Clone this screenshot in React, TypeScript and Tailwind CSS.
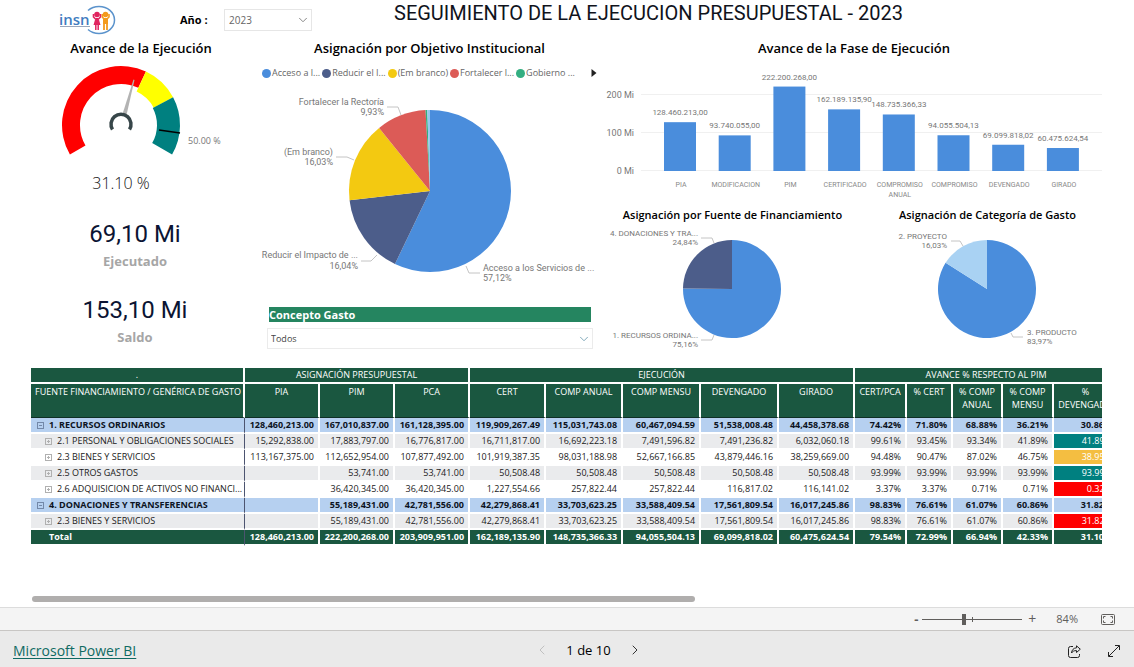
import { ChevronLeft, ChevronRight, ChevronDown } from 'lucide-react'

const BLUE = '#4a8ddc'
const NAVY = '#4c5d8a'

type Slice = { value: number; color: string }
type Callout = {
  lines: [string, string]
  x: number
  y: number
  gap: number
  anchor: 'start' | 'end'
  leader: string
}

// Point on a circle, angle in degrees clockwise from 12 o'clock
function polar(cx: number, cy: number, r: number, deg: number) {
  const a = (deg * Math.PI) / 180
  return `${(cx + r * Math.sin(a)).toFixed(2)} ${(cy - r * Math.cos(a)).toFixed(2)}`
}

function ringPath(cx: number, cy: number, outer: number, inner: number, from: number, to: number) {
  const large = to - from > 180 ? 1 : 0
  return [
    `M${polar(cx, cy, outer, from)}`,
    `A${outer} ${outer} 0 ${large} 1 ${polar(cx, cy, outer, to)}`,
    `L${polar(cx, cy, inner, to)}`,
    `A${inner} ${inner} 0 ${large} 0 ${polar(cx, cy, inner, from)}Z`,
  ].join(' ')
}

function Pie({ cx, cy, r, slices }: { cx: number; cy: number; r: number; slices: Slice[] }) {
  let start = 0
  return (
    <g>
      {slices.map((s, i) => {
        const end = start + s.value * 3.6
        const d = `M${cx} ${cy} L${polar(cx, cy, r, start)} A${r} ${r} 0 ${end - start > 180 ? 1 : 0} 1 ${polar(cx, cy, r, end)}Z`
        start = end
        return <path key={i} d={d} fill={s.color} />
      })}
    </g>
  )
}

function Callouts({ items, className }: { items: Callout[]; className: string }) {
  return (
    <g className={className}>
      {items.map((c) => (
        <g key={c.lines[0]}>
          <polyline points={c.leader} fill="none" stroke="#c4c4c4" />
          <text x={c.x} y={c.y} textAnchor={c.anchor}>{c.lines[0]}</text>
          <text x={c.x} y={c.y + c.gap} textAnchor={c.anchor}>{c.lines[1]}</text>
        </g>
      ))}
    </g>
  )
}

function Logo() {
  return (
    <svg viewBox="0 0 57 32" className="h-8 w-[57px]" role="img" aria-label="insn">
      <path d="M29 6.500 A15.500 13.500 0 1 1 29 25.500" fill="none" stroke="#5b93cc" strokeWidth="1.500" />
      <text x="0" y="21" fill="#3f7cc0" className="font-['Open_Sans'] text-[15px] font-semibold">insn</text>
      <rect x="1" y="22" width="30" height="1" fill="#9aa7bd" />
      <g fill="#e0245e" stroke="#e0245e">
        <circle cx="38" cy="10.500" r="2.800" stroke="none" />
        <path d="M34.500 10 L34.500 13 L36.500 15 M41.500 10 L41.500 13 L39.500 15" fill="none" strokeWidth="1.600" />
        <path d="M36.500 14h3l2 7h-7z" stroke="none" />
        <path d="M36.800 20v6M39.200 20v6" strokeWidth="1.500" />
      </g>
      <g fill="#f39a1d" stroke="#f39a1d">
        <circle cx="46.500" cy="10.500" r="2.800" stroke="none" />
        <path d="M43.300 10 L43.300 13 L45 15 M50 10 L50 13 L48 15" fill="none" strokeWidth="1.600" />
        <path d="M44 14h5v6h-5z" stroke="none" />
        <path d="M45 19v7M48 19v7" strokeWidth="1.800" />
      </g>
    </svg>
  )
}

function Gauge() {
  const cx = 121
  const cy = 67
  return (
    <svg viewBox="0 0 250 140" className="w-full" role="img" aria-label="Avance 31.10 %">
      <path d={ringPath(cx, cy, 59, 41, -120, 25)} fill="#ff0000" />
      <path d={ringPath(cx, cy, 59, 37, 25, 62)} fill="#ffff00" />
      <path d={ringPath(cx, cy, 59, 36, 62, 120)} fill="#008080" />
      <path d="M159 72 L180 75" stroke="#000" strokeWidth="1.500" />
      <path d="M122.500 56 L126.500 57 L134.500 22 L133.500 21.500Z" fill="#b3b3b3" />
      <path d="M112.500 71.500 A10 10 0 1 1 129.500 71.500" fill="none" stroke="#374649" strokeWidth="3.500" />
      <text x="188" y="86" className="fill-[#777] font-['Open_Sans'] text-[9px]">50.00 %</text>
      <text x="121" y="131" textAnchor="middle" className="fill-[#111] font-['Open_Sans'] text-[16px] font-light">31.10 %</text>
    </svg>
  )
}

function Card({ value, label }: { value: string; label: string }) {
  return (
    <div className="pl-5 text-center">
      <p className="font-['Roboto'] text-2xl leading-8 text-[#0b1433]">{value}</p>
      <p className="text-[13px] leading-[22px] font-bold text-[#a6a6a6]">{label}</p>
    </div>
  )
}

const legend = [
  { label: 'Acceso a l...', dot: 'bg-[#4a8ddc]' },
  { label: 'Reducir el I...', dot: 'bg-[#4c5d8a]' },
  { label: '(Em branco)', dot: 'bg-[#f3c911]' },
  { label: 'Fortalecer l...', dot: 'bg-[#dc5b57]' },
  { label: 'Gobierno ...', dot: 'bg-[#33ae81]' },
]

const objetivoCallouts: Callout[] = [
  { lines: ['Fortalecer la Rectoría', '9,93%'], x: 134, y: 21, gap: 10, anchor: 'end', leader: '137,23 148,23 151,31' },
  { lines: ['(Em branco)', '16,03%'], x: 83, y: 71, gap: 10, anchor: 'end', leader: '86,73 97,73 104,76' },
  { lines: ['Reducir el Impacto de ...', '16,04%'], x: 108, y: 174, gap: 11, anchor: 'end', leader: '111,177 121,177 127,171' },
  { lines: ['Acceso a los Servicios de ...', '57,12%'], x: 233, y: 187, gap: 10, anchor: 'start', leader: '216,182 219,189 230,189' },
]

const fuenteCallouts: Callout[] = [
  { lines: ['4. DONACIONES Y TRA...', '24,84%'], x: 93, y: 11, gap: 9, anchor: 'end', leader: '96,13 107,13 109,18' },
  { lines: ['1. RECURSOS ORDINA...', '75,16%'], x: 93, y: 113, gap: 9, anchor: 'end', leader: '96,115 107,115 109,110' },
]

const categoriaCallouts: Callout[] = [
  { lines: ['2. PROYECTO', '16,03%'], x: 87, y: 14, gap: 9, anchor: 'end', leader: '91,16 100,16 103,21' },
  { lines: ['3. PRODUCTO', '83,97%'], x: 167, y: 110, gap: 9, anchor: 'start', leader: '151,108 153,112 163,112' },
]

const fases = [
  { name: ['PIA'], value: 128.46, label: '128.460.213,00' },
  { name: ['MODIFICACION'], value: 93.74, label: '93.740.055,00' },
  { name: ['PIM'], value: 222.2, label: '222.200.268,00' },
  { name: ['CERTIFICADO'], value: 162.19, label: '162.189.135,90' },
  { name: ['COMPROMISO', 'ANUAL'], value: 148.74, label: '148.735.366,33' },
  { name: ['COMPROMISO'], value: 94.06, label: '94.055.504,13' },
  { name: ['DEVENGADO'], value: 69.1, label: '69.099.818,02' },
  { name: ['GIRADO'], value: 60.48, label: '60.475.624,54' },
]

function FaseChart() {
  const base = 113
  return (
    <svg viewBox="0 0 510 147" className="w-full font-['Roboto']" role="img" aria-label="Avance de la Fase de Ejecución">
      {[0, 100, 200].map((t) => (
        <g key={t}>
          <line x1="36" x2="497" y1={base - t * 0.38 - 0.5} y2={base - t * 0.38 - 0.5} stroke="#f0f0f0" />
          <text x="29" y={base - t * 0.38 + 3} textAnchor="end" className="fill-[#777] text-[9px]">{t} Mi</text>
        </g>
      ))}
      {fases.map((f, i) => {
        const x = 75 + i * 54.7
        const h = f.value * 0.38
        return (
          <g key={f.label} textAnchor="middle">
            <rect x={x - 16} y={base - h} width="32" height={h} fill={BLUE} />
            <text x={x} y={base - h - 7} className="fill-[#777] text-[8px]">{f.label}</text>
            {f.name.map((n, line) => (
              <text key={n} x={x + 1} y={129 + line * 10} className="fill-[#888] text-[7px]">{n}</text>
            ))}
          </g>
        )
      })}
    </svg>
  )
}

const columns = [
  'PIA', 'PIM', 'PCA', 'CERT', 'COMP ANUAL', 'COMP MENSU', 'DEVENGADO', 'GIRADO',
  'CERT/PCA', '% CERT', '% COMP ANUAL', '% COMP MENSU', '% DEVENGADO',
]

type Row = { name: string; level: 0 | 1 | 2; cells: string[]; mark?: string }

const rows: Row[] = [
  { name: '1. RECURSOS ORDINARIOS', level: 0, cells: ['128,460,213.00', '167,010,837.00', '161,128,395.00', '119,909,267.49', '115,031,743.08', '60,467,094.59', '51,538,008.48', '44,458,378.68', '74.42%', '71.80%', '68.88%', '36.21%', '30.86%'] },
  { name: '2.1 PERSONAL Y OBLIGACIONES SOCIALES', level: 1, mark: 'bg-[#008080]', cells: ['15,292,838.00', '17,883,797.00', '16,776,817.00', '16,711,817.00', '16,692,223.18', '7,491,596.82', '7,491,236.82', '6,032,060.18', '99.61%', '93.45%', '93.34%', '41.89%', '41.89%'] },
  { name: '2.3 BIENES Y SERVICIOS', level: 1, mark: 'bg-[#f4be41]', cells: ['113,167,375.00', '112,652,954.00', '107,877,492.00', '101,919,387.35', '98,031,188.98', '52,667,166.85', '43,879,446.16', '38,259,669.00', '94.48%', '90.47%', '87.02%', '46.75%', '38.95%'] },
  { name: '2.5 OTROS GASTOS', level: 1, mark: 'bg-[#008080]', cells: ['', '53,741.00', '53,741.00', '50,508.48', '50,508.48', '50,508.48', '50,508.48', '50,508.48', '93.99%', '93.99%', '93.99%', '93.99%', '93.99%'] },
  { name: '2.6 ADQUISICION DE ACTIVOS NO FINANCI...', level: 1, mark: 'bg-[#ff0000]', cells: ['', '36,420,345.00', '36,420,345.00', '1,227,554.66', '257,822.44', '257,822.44', '116,817.02', '116,141.02', '3.37%', '3.37%', '0.71%', '0.71%', '0.32%'] },
  { name: '4. DONACIONES Y TRANSFERENCIAS', level: 0, cells: ['', '55,189,431.00', '42,781,556.00', '42,279,868.41', '33,703,623.25', '33,588,409.54', '17,561,809.54', '16,017,245.86', '98.83%', '76.61%', '61.07%', '60.86%', '31.82%'] },
  { name: '2.3 BIENES Y SERVICIOS', level: 1, mark: 'bg-[#ff0000]', cells: ['', '55,189,431.00', '42,781,556.00', '42,279,868.41', '33,703,623.25', '33,588,409.54', '17,561,809.54', '16,017,245.86', '98.83%', '76.61%', '61.07%', '60.86%', '31.82%'] },
  { name: 'Total', level: 2, cells: ['128,460,213.00', '222,200,268.00', '203,909,951.00', '162,189,135.90', '148,735,366.33', '94,055,504.13', '69,099,818.02', '60,475,624.54', '79.54%', '72.99%', '66.94%', '42.33%', '31.10%'] },
]

function Expander({ open }: { open: boolean }) {
  return (
    <button type="button" aria-label={open ? 'Contraer' : 'Expandir'} className="block">
      <svg viewBox="0 0 7 7" className="size-[7px]" fill="none" stroke={open ? '#7388a8' : '#b0b0b0'}>
        <rect x="0.5" y="0.5" width="6" height="6" />
        <path d={open ? 'M2 3.5h3' : 'M2 3.5h3M3.5 2v3'} />
      </svg>
    </button>
  )
}

function BudgetTable() {
  const head = 'border-r-2 border-b-2 border-white bg-[#1a5740] font-normal text-white'
  return (
    <table className="w-[1088px] table-fixed border-separate border-spacing-0 text-[9px] leading-[14px] text-[#1a1a1a]">
      <colgroup>
        <col className="w-[214px]" />
        <col className="w-[75px]" />
        <col className="w-[75px]" />
        <col className="w-[75px]" />
        <col className="w-[76px]" />
        <col className="w-[77px]" />
        <col className="w-[78px]" />
        <col className="w-[78px]" />
        <col className="w-[76px]" />
        <col className="w-[52px]" />
        <col className="w-[46px]" />
        <col className="w-[50px]" />
        <col className="w-[51px]" />
        <col className="w-[65px]" />
      </colgroup>
      <thead>
        <tr className="h-4">
          <th className={head}>.</th>
          <th colSpan={3} className={head}>ASIGNACIÓN PRESUPUESTAL</th>
          <th colSpan={5} className={head}>EJECUCIÓN</th>
          <th colSpan={5} className={head}>AVANCE % RESPECTO AL PIM</th>
        </tr>
        <tr className="h-[34px] align-top leading-[13px]">
          <th className="border-r-2 border-b border-r-white border-b-[#0e2f25] bg-[#1a5740] px-1 pt-px font-normal whitespace-nowrap text-white">FUENTE FINANCIAMIENTO / GENÉRICA DE GASTO</th>
          {columns.map((c) => (
            <th key={c} className="border-r-2 border-b border-r-white border-b-[#0e2f25] bg-[#1a5740] px-1 pt-px font-normal text-white">{c}</th>
          ))}
        </tr>
      </thead>
      <tbody>
        {rows.map((r, i) => {
          const tone =
            r.level === 2
              ? 'bg-[#1a5740] font-bold text-white'
              : r.level === 0
                ? 'bg-[#b6d0f0] font-bold text-[#0c1322]'
                : i % 2 === 1 || i === 6
                  ? 'bg-[#eaebed] font-normal'
                  : 'bg-white font-normal'
          return (
            <tr key={i} className="h-4">
              <th className={`border-r border-b-2 border-r-[#4c5470] border-b-white text-left ${tone}`}>
                <div className={`flex items-center gap-[5px] whitespace-nowrap ${r.level === 1 ? 'pl-[14px]' : r.level === 0 ? 'pl-[6px]' : 'pl-[18px]'}`}>
                  {r.level !== 2 && <Expander open={r.level === 0} />}
                  {r.name}
                </div>
              </th>
              {r.cells.map((c, j) => (
                <td
                  key={j}
                  className={`border-r-2 border-b-2 border-white text-right ${j === 12 ? 'pr-[5px]' : 'pr-1'} ${j === 12 && r.mark ? `${r.mark} text-white` : tone}`}
                >
                  {c}
                </td>
              ))}
            </tr>
          )
        })}
      </tbody>
    </table>
  )
}

export default function App() {
  return (
    <div className="flex min-h-screen flex-col overflow-x-hidden bg-white font-['Open_Sans',sans-serif] text-black">
      <header className="flex h-[38px] items-center pt-0.5 pl-[59px]">
        <Logo />
        <label htmlFor="anio" className="ml-16 w-11 text-[11px] font-bold">Año :</label>
        <div className="relative">
          <select id="anio" className="block h-[22px] w-[88px] appearance-none border border-[#e6e6e6] bg-white pl-1 text-[10px] text-[#666]">
            <option>2023</option>
          </select>
          <ChevronDown size={14} strokeWidth={1.5} className="pointer-events-none absolute top-1 right-0.5 text-[#777]" />
        </div>
        <h1 className="ml-[82px] pb-3.5 font-['Roboto'] text-[20px] leading-6 whitespace-nowrap text-[#10131c]">
          SEGUIMIENTO DE LA EJECUCION PRESUPUESTAL - 2023
        </h1>
      </header>

      <main className="flex flex-1 flex-col">
        <div className="grid grid-cols-[250fr_355fr_529fr]">
          {/* Gauge and cards */}
          <section className="min-w-0">
            <h2 className="pl-8 text-center text-[13px] leading-5 font-semibold">Avance de la Ejecución</h2>
            <Gauge />
            <div className="mt-5 flex flex-col gap-[22px]">
              <Card value="69,10 Mi" label="Ejecutado" />
              <Card value="153,10 Mi" label="Saldo" />
            </div>
          </section>

          {/* Objetivo institucional */}
          <section className="min-w-0">
            <h2 className="pl-1 text-center text-[13px] leading-5 font-semibold">Asignación por Objetivo Institucional</h2>
            <div className="mt-1 flex h-[22px] items-center justify-between pr-2 pl-3">
              <ul className="flex gap-0.5 text-[9px] whitespace-nowrap text-[#666]">
                {legend.map((l) => (
                  <li key={l.label} className="flex items-center gap-px">
                    <span className={`size-[9px] rounded-full ${l.dot}`} />
                    {l.label}
                  </li>
                ))}
              </ul>
              <button type="button" aria-label="Siguiente">
                <svg viewBox="0 0 6 8" className="h-2 w-1.5"><path d="M0.500 0 L5.500 4 L0.500 8Z" fill="#222" /></svg>
              </button>
            </div>
            <svg viewBox="0 0 355 218" className="w-full" role="img" aria-label="Asignación por Objetivo Institucional">
              <Pie
                cx={180}
                cy={107}
                r={81}
                slices={[
                  { value: 57.12, color: BLUE },
                  { value: 16.04, color: NAVY },
                  { value: 16.03, color: '#f3c911' },
                  { value: 9.93, color: '#dc5b57' },
                  { value: 0.35, color: '#33ae81' },
                  { value: 0.53, color: '#95c8f0' },
                ]}
              />
              <Callouts items={objetivoCallouts} className="fill-[#777] font-['Roboto'] text-[9px]" />
            </svg>
            <div className="mt-[5px] pr-3 pl-[17px]">
              <label htmlFor="concepto" className="mr-0.5 ml-0.5 block bg-[#258560] text-[11px] leading-[15px] font-bold text-white">
                Concepto Gasto
              </label>
              <div className="relative mt-1.5">
                <select id="concepto" className="block h-[21px] w-full appearance-none border border-[#ebebeb] bg-white pl-[3px] text-[9px] text-[#444]">
                  <option>Todos</option>
                </select>
                <ChevronDown size={14} strokeWidth={1.5} className="pointer-events-none absolute top-1 right-0.5 text-[#6f9db0]" />
              </div>
            </div>
          </section>

          {/* Fases, fuente y categoría */}
          <section className="min-w-0 pr-[19px]">
            <h2 className="pr-3 text-center text-[13px] leading-5 font-semibold">Avance de la Fase de Ejecución</h2>
            <FaseChart />
            <div className="grid grid-cols-2">
              <div>
                <h2 className="text-center text-[11px] leading-5 font-semibold whitespace-nowrap">Asignación por Fuente de Financiamiento</h2>
                <svg viewBox="0 0 255 130" className="w-full" role="img" aria-label="Asignación por Fuente de Financiamiento">
                  <Pie cx={127} cy={64} r={49} slices={[{ value: 75.16, color: BLUE }, { value: 24.84, color: NAVY }]} />
                  <Callouts items={fuenteCallouts} className="fill-[#777] font-['Roboto'] text-[8px]" />
                </svg>
              </div>
              <div>
                <h2 className="text-center text-[11px] leading-5 font-semibold whitespace-nowrap">Asignación de Categoría de Gasto</h2>
                <svg viewBox="0 0 255 130" className="w-full" role="img" aria-label="Asignación de Categoría de Gasto">
                  <Pie cx={127} cy={64} r={49} slices={[{ value: 83.97, color: BLUE }, { value: 16.03, color: '#a9d2f3' }]} />
                  <Callouts items={categoriaCallouts} className="fill-[#777] font-['Roboto'] text-[8px]" />
                </svg>
              </div>
            </div>
          </section>
        </div>

        <div className="mt-[13px] mr-8 ml-[31px] overflow-hidden">
          <BudgetTable />
        </div>
        <div className="mt-auto mr-8 mb-[5px] ml-8 pt-10">
          <div className="h-1.5 w-[62%] rounded-full bg-[#b0aead]" />
        </div>
      </main>

      <div className="flex h-[23px] items-center justify-end border-t border-[#dcdcdc] bg-[#f4f4f4] pr-[19px] text-[#605e5c]">
        <button type="button" aria-label="Alejar" className="w-3 text-[13px] leading-4 font-bold">-</button>
        <div className="relative flex items-center">
          <input
            type="range"
            aria-label="Zoom"
            defaultValue={41}
            className="h-3 w-[100px] appearance-none bg-[linear-gradient(#605e5c,#605e5c)] bg-[length:100%_1px] bg-center bg-no-repeat [&::-webkit-slider-thumb]:h-[11px] [&::-webkit-slider-thumb]:w-1 [&::-webkit-slider-thumb]:appearance-none [&::-webkit-slider-thumb]:bg-[#605e5c]"
          />
          <span className="pointer-events-none absolute left-1/2 h-[5px] w-px bg-[#605e5c]" />
        </div>
        <button type="button" aria-label="Acercar" className="w-5 text-[14px] leading-4">+</button>
        <span className="mr-[23px] ml-3.5 text-[11px]">84%</span>
        <button type="button" aria-label="Ajustar a la página">
          <svg viewBox="0 0 14 11" className="h-[11px] w-3.5" fill="none" stroke="#605e5c">
            <rect x="0.5" y="0.5" width="13" height="10" rx="1" />
            <path d="M2.500 4.500v-2h2M9.500 2.500h2v2M11.500 6.500v2h-2M4.500 8.500h-2v-2" />
          </svg>
        </button>
      </div>

      <footer className="grid h-[37px] grid-cols-3 items-center border-t border-[#c8c6c4] bg-[#eaeaea] pt-1 pr-3.5 pl-[13px]">
        <a href="https://powerbi.microsoft.com" className="text-[14px] leading-5 text-[#0f6a63] underline underline-offset-2">Microsoft Power BI</a>
        <nav className="flex items-center justify-center gap-4 pb-0.5 pl-11">
          <button type="button" aria-label="Página anterior" disabled className="text-[#c0c0c0]"><ChevronLeft size={16} strokeWidth={1.5} /></button>
          <span className="text-[13px] leading-4 font-medium">1 de 10</span>
          <button type="button" aria-label="Página siguiente" className="text-[#333]"><ChevronRight size={16} strokeWidth={1.5} /></button>
        </nav>
        <div className="flex items-center justify-end gap-[27px]">
          <button type="button" aria-label="Compartir">
            <svg viewBox="0 0 13 13" className="size-[13px]" fill="none" stroke="#222">
              <path d="M5 1.500H2.500a2 2 0 0 0-2 2v7a2 2 0 0 0 2 2h7a2 2 0 0 0 2-2V9" />
              <path d="M8.500 0.800 L12.300 4.200 L8.500 7.500 V5.600 C6 5.500 4.700 6.300 3.500 8 C3.800 5 5.500 3 8.500 2.800Z" strokeLinejoin="round" />
            </svg>
          </button>
          <button type="button" aria-label="Pantalla completa">
            <svg viewBox="0 0 12 12" className="size-3" fill="none" stroke="#222">
              <path d="M0.800 11.200 L11.200 0.800 M7 0.500h4.500V5 M0.500 7v4.500H5" />
            </svg>
          </button>
        </div>
      </footer>
    </div>
  )
}
